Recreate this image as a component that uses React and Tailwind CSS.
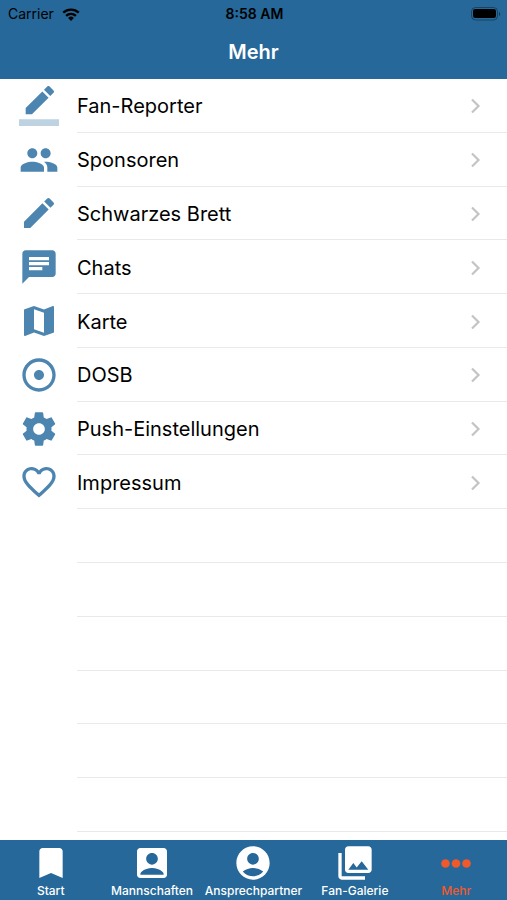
import React, { useState } from "react";
import {
  MdPeople,
  MdEdit,
  MdChat,
  MdAdjust,
  MdFavoriteBorder,
  MdBookmark,
  MdAccountBox,
  MdAccountCircle,
  MdPhotoLibrary,
} from "react-icons/md";

const ReporterIcon = ({ className }) => (
  <svg viewBox="0 0 24 24" fill="currentColor" className={className}>
    <path d="M17.75 7L14 3.25l-10 10V17h3.75l10-10zm2.96-2.96c.39-.39.39-1.02 0-1.41L18.37.29a.996.996 0 0 0-1.41 0L15 2.25 18.75 6l1.96-1.96z" />
    <path fillOpacity=".36" d="M0 20h24v4H0z" />
  </svg>
);

const MapIcon = ({ className }) => (
  <svg viewBox="0 0 24 24" fill="currentColor" className={className}>
    <path d="M20.5 3l-.16.03L15 5.1 9 3 3.36 4.9c-.21.07-.36.25-.36.48V20.5c0 .28.22.5.5.5l.16-.03L9 18.9l6 2.1 5.64-1.9c.21-.07.36-.25.36-.48V3.5c0-.28-.22-.5-.5-.5zM15 19l-6-2.11V5l6 2.11V19z" />
  </svg>
);

const GearIcon = ({ className }) => (
  <svg viewBox="0 0 24 24" fill="currentColor" className={className}>
    <path d="M19.43 12.98c.04-.32.07-.64.07-.98s-.03-.66-.07-.98l2.11-1.65c.19-.15.24-.42.12-.64l-2-3.46c-.12-.22-.39-.3-.61-.22l-2.49 1c-.52-.4-1.08-.73-1.69-.98l-.38-2.65C14.46 2.18 14.25 2 14 2h-4c-.25 0-.46.18-.49.42l-.38 2.65c-.61.25-1.17.59-1.69.98l-2.49-1c-.23-.09-.49 0-.61.22l-2 3.46c-.13.22-.07.49.12.64l2.11 1.65c-.04.32-.07.65-.07.98s.03.66.07.98l-2.11 1.65c-.19.15-.24.42-.12.64l2 3.46c.12.22.39.3.61.22l2.49-1c.52.4 1.08.73 1.69.98l.38 2.65c.03.24.24.42.49.42h4c.25 0 .46-.18.49-.42l.38-2.65c.61-.25 1.17-.59 1.69-.98l2.49 1c.23.09.49 0 .61-.22l2-3.46c.12-.22.07-.49-.12-.64l-2.11-1.65zM12 15.5c-1.93 0-3.5-1.57-3.5-3.5s1.57-3.5 3.5-3.5 3.5 1.57 3.5 3.5-1.57 3.5-3.5 3.5z" />
  </svg>
);

const DotsIcon = ({ className }) => (
  <svg viewBox="0 0 40 40" fill="currentColor" className={className}>
    <circle cx="9.5" cy="20.5" r="4.3" />
    <circle cx="20" cy="20.5" r="4.3" />
    <circle cx="30.5" cy="20.5" r="4.3" />
  </svg>
);

const menuItems = [
  { title: "Fan-Reporter", icon: ReporterIcon },
  { title: "Sponsoren", icon: MdPeople },
  { title: "Schwarzes Brett", icon: MdEdit },
  { title: "Chats", icon: MdChat },
  { title: "Karte", icon: MapIcon },
  { title: "DOSB", icon: MdAdjust },
  { title: "Push-Einstellungen", icon: GearIcon },
  { title: "Impressum", icon: MdFavoriteBorder },
];

const emptyRows = [1, 2, 3, 4, 5, 6];

const tabs = [
  { title: "Start", icon: MdBookmark },
  { title: "Mannschaften", icon: MdAccountBox },
  { title: "Ansprechpartner", icon: MdAccountCircle },
  { title: "Fan-Galerie", icon: MdPhotoLibrary },
  { title: "Mehr", icon: DotsIcon },
];

const StatusBar = () => (
  <div className="grid grid-cols-3 items-center h-7 pl-2 pr-1.5 text-black">
    <div className="flex items-center gap-2 text-sm">
      Carrier
      <svg viewBox="0 0 18 13" className="w-[18px] h-[13px]" fill="none">
        <path d="M1.2 4.7a11.3 11.3 0 0 1 15.6 0" stroke="currentColor" strokeWidth="2.4" />
        <path d="M4.1 7.8a7.1 7.1 0 0 1 9.8 0" stroke="currentColor" strokeWidth="2.3" />
        <path d="M9 13l-2.9-3a4.2 4.2 0 0 1 5.8 0z" fill="currentColor" />
      </svg>
    </div>
    <div className="text-center text-sm font-semibold">8:58 AM</div>
    <svg viewBox="0 0 30 15" className="justify-self-end w-[30px] h-[15px]">
      <rect x="0.5" y="0.5" width="26" height="12.5" rx="4" fill="none" stroke="currentColor" strokeOpacity=".35" />
      <rect x="2" y="2" width="23" height="9" rx="2.2" fill="currentColor" />
      <path d="M28 5v4c1.6-.6 1.6-3.4 0-4z" fill="currentColor" fillOpacity=".45" />
    </svg>
  </div>
);

const App = () => {
  const [activeTab, setActiveTab] = useState("Mehr");

  return (
    <div className="flex flex-col min-h-screen bg-white font-['Inter',sans-serif]">
      <header className="bg-[#256899]">
        <StatusBar />
        <h1 className="h-[51px] pt-2.5 text-center text-xl leading-7 font-semibold text-white">
          Mehr
        </h1>
      </header>

      <main className="flex flex-col flex-1 pb-2">
        <ul className="grid auto-rows-fr flex-1">
          {menuItems.map((item) => {
            const Icon = item.icon;
            return (
              <li key={item.title} className="flex min-h-12">
                <button className="flex flex-1 items-center text-left">
                  <span className="flex justify-center w-[77px]">
                    <Icon className="w-10 h-10 text-[#4c85b0]" />
                  </span>
                  <span className="flex flex-1 items-center justify-between self-stretch pt-0.5 pr-6 border-b border-[#e9e9eb] text-xl text-black">
                    {item.title}
                    <svg viewBox="0 0 14 18" className="w-3.5 h-[18px] text-[#c4c4c7]" fill="none">
                      <path d="M3 2.5L9.5 9 3 15.5" stroke="currentColor" strokeWidth="2.2" />
                    </svg>
                  </span>
                </button>
              </li>
            );
          })}
          {emptyRows.map((row) => (
            <li key={row} className="min-h-12 ml-[77px] border-b border-[#e9e9eb]" />
          ))}
        </ul>
      </main>

      <nav className="grid grid-cols-5 h-[60px] bg-[#256899]">
        {tabs.map((tab) => {
          const Icon = tab.icon;
          return (
            <button
              key={tab.title}
              onClick={() => setActiveTab(tab.title)}
              className={`flex flex-col items-center pt-[3px] ${
                activeTab === tab.title ? "text-[#f1592a]" : "text-white"
              }`}
            >
              <Icon className="w-10 h-10" />
              <span className="text-xs leading-4 font-medium whitespace-nowrap">
                {tab.title}
              </span>
            </button>
          );
        })}
      </nav>
    </div>
  );
};

export default App;
